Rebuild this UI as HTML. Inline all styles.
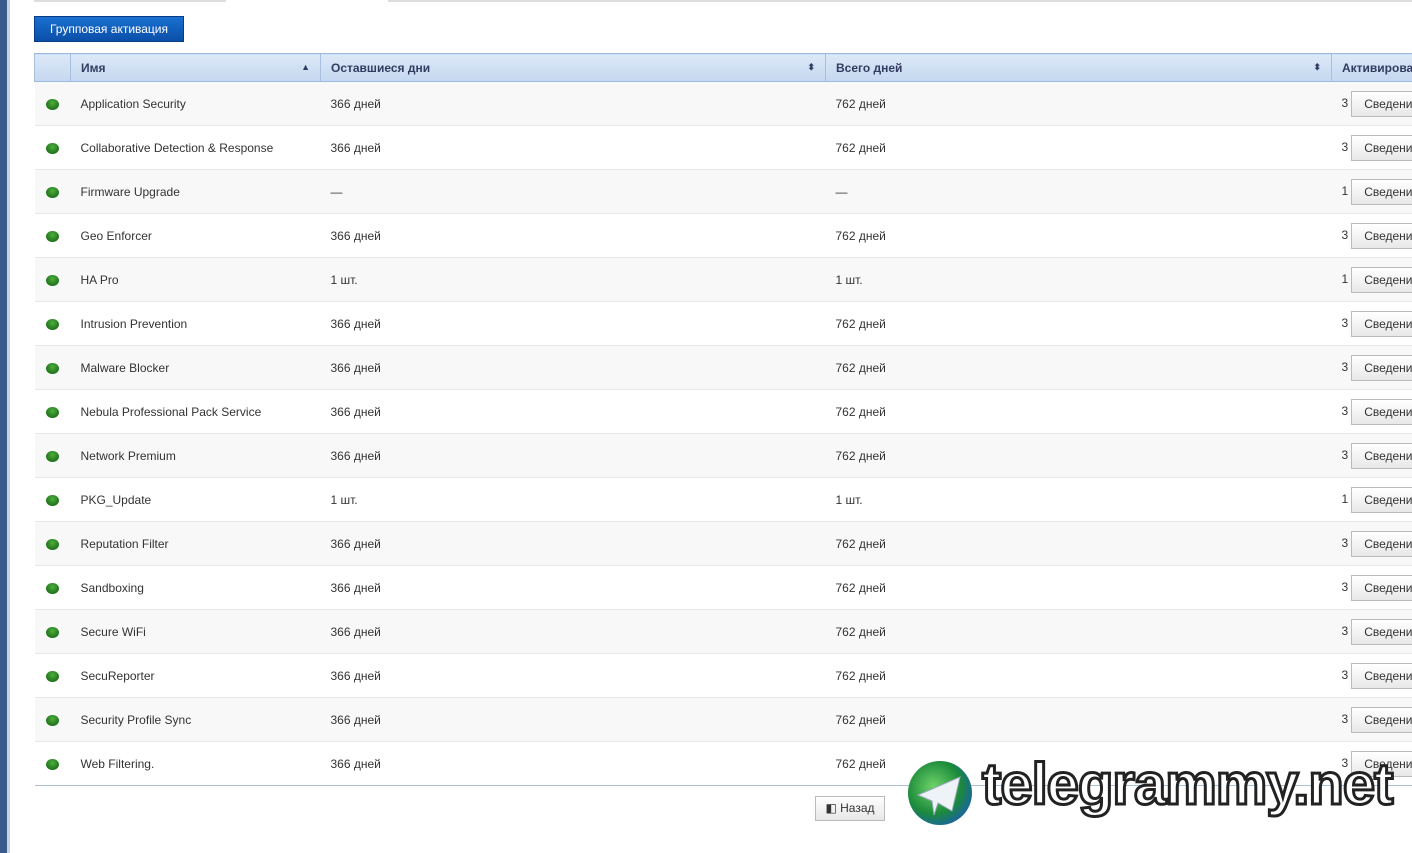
<!DOCTYPE html><html><head><meta charset="utf-8"><style>
body{margin:0;width:1412px;height:853px;overflow:hidden;background:#fff;font-family:"Liberation Sans",Arial,sans-serif;font-size:12px;color:#333;position:relative}
.side{position:absolute;left:0;top:0;width:7px;height:853px;background:#3a5a8c}
.side2{position:absolute;left:7px;top:0;width:3px;height:853px;background:#c8d4e4}
.tl{position:absolute;top:0;height:2px;background:#ddd}
.btn1{position:absolute;left:34px;top:16px;width:150px;height:26px;background:linear-gradient(#1a6fd0,#0a4fa8);color:#fff;font-size:12px;line-height:24px;text-align:center;border:1px solid #083d85;box-sizing:border-box}
table{position:absolute;left:34px;top:53px;border-collapse:collapse;width:1400px;table-layout:fixed}
th{height:27px;background:linear-gradient(#dce8f7,#c4d8f0);border-top:1px solid #9cb8dc;border-bottom:1px solid #9cb8dc;border-left:1px solid #a8c0e0;text-align:left;padding:0 10px;color:#333c60;font-weight:bold;font-size:12px;position:relative}
td{height:43px;border-bottom:1px solid #e6e6e6;padding:0 10px;white-space:nowrap;overflow:hidden;vertical-align:middle}
tr:nth-child(even) td{background:#f8f8f8}
tr:last-child td{border-bottom:1px solid #a9c0d6}
.dot{display:inline-block;width:13px;height:11px;border-radius:50%;background:radial-gradient(circle at 50% 35%,#4caf3a,#0d5a10);margin-left:1px;vertical-align:middle;margin-top:1px}
.sv{display:inline-block;border:1px solid #bbb;background:linear-gradient(#fff,#e8e8e8);height:24px;line-height:24px;padding:0 12px;vertical-align:middle;margin-left:3px}
.ar{position:absolute;right:10px;top:8px;font-size:9px}
.back{position:absolute;left:815px;top:796px;width:70px;height:25px;border:1px solid #bbb;background:linear-gradient(#fff,#e8e8e8);box-sizing:border-box;line-height:23px;text-align:center}
.logo{position:absolute;left:908px;top:761px;width:64px;height:64px;border-radius:50%;background:radial-gradient(circle at 40% 40%,#6fd36a,#1b8a3a 50%,#1a5fb0 80%)}
.wm{position:absolute;left:982px;top:751px;font-size:58px;font-weight:bold;color:#fff;-webkit-text-stroke:3px #222;letter-spacing:-1px}
</style></head><body>
<div class="side"></div><div class="side2"></div>
<div class="tl" style="left:34px;width:192px"></div><div class="tl" style="left:388px;width:1024px"></div>
<div class="btn1">Групповая активация</div>
<table>
<colgroup><col style="width:36px"><col style="width:250px"><col style="width:505px"><col style="width:506px"><col style="width:103px"></colgroup>
<tr><th></th><th>Имя<span class="ar">▲</span></th><th>Оставшиеся дни<span class="ar">⬍</span></th><th>Всего дней<span class="ar">⬍</span></th><th style="padding-left:10px">Активирова</th></tr>
<tr><td><span class="dot"></span></td><td>Application Security</td><td>366 дней</td><td>762 дней</td><td style="padding:0 0 0 10px">3<span class="sv">Сведения</span></td></tr>
<tr><td><span class="dot"></span></td><td>Collaborative Detection &amp; Response</td><td>366 дней</td><td>762 дней</td><td style="padding:0 0 0 10px">3<span class="sv">Сведения</span></td></tr>
<tr><td><span class="dot"></span></td><td>Firmware Upgrade</td><td>—</td><td>—</td><td style="padding:0 0 0 10px">1<span class="sv">Сведения</span></td></tr>
<tr><td><span class="dot"></span></td><td>Geo Enforcer</td><td>366 дней</td><td>762 дней</td><td style="padding:0 0 0 10px">3<span class="sv">Сведения</span></td></tr>
<tr><td><span class="dot"></span></td><td>HA Pro</td><td>1 шт.</td><td>1 шт.</td><td style="padding:0 0 0 10px">1<span class="sv">Сведения</span></td></tr>
<tr><td><span class="dot"></span></td><td>Intrusion Prevention</td><td>366 дней</td><td>762 дней</td><td style="padding:0 0 0 10px">3<span class="sv">Сведения</span></td></tr>
<tr><td><span class="dot"></span></td><td>Malware Blocker</td><td>366 дней</td><td>762 дней</td><td style="padding:0 0 0 10px">3<span class="sv">Сведения</span></td></tr>
<tr><td><span class="dot"></span></td><td>Nebula Professional Pack Service</td><td>366 дней</td><td>762 дней</td><td style="padding:0 0 0 10px">3<span class="sv">Сведения</span></td></tr>
<tr><td><span class="dot"></span></td><td>Network Premium</td><td>366 дней</td><td>762 дней</td><td style="padding:0 0 0 10px">3<span class="sv">Сведения</span></td></tr>
<tr><td><span class="dot"></span></td><td>PKG_Update</td><td>1 шт.</td><td>1 шт.</td><td style="padding:0 0 0 10px">1<span class="sv">Сведения</span></td></tr>
<tr><td><span class="dot"></span></td><td>Reputation Filter</td><td>366 дней</td><td>762 дней</td><td style="padding:0 0 0 10px">3<span class="sv">Сведения</span></td></tr>
<tr><td><span class="dot"></span></td><td>Sandboxing</td><td>366 дней</td><td>762 дней</td><td style="padding:0 0 0 10px">3<span class="sv">Сведения</span></td></tr>
<tr><td><span class="dot"></span></td><td>Secure WiFi</td><td>366 дней</td><td>762 дней</td><td style="padding:0 0 0 10px">3<span class="sv">Сведения</span></td></tr>
<tr><td><span class="dot"></span></td><td>SecuReporter</td><td>366 дней</td><td>762 дней</td><td style="padding:0 0 0 10px">3<span class="sv">Сведения</span></td></tr>
<tr><td><span class="dot"></span></td><td>Security Profile Sync</td><td>366 дней</td><td>762 дней</td><td style="padding:0 0 0 10px">3<span class="sv">Сведения</span></td></tr>
<tr><td><span class="dot"></span></td><td>Web Filtering.</td><td>366 дней</td><td>762 дней</td><td style="padding:0 0 0 10px">3<span class="sv">Сведения</span></td></tr>
</table>
<div class="back">◧ Назад</div>
<div class="logo"><svg width="64" height="64" viewBox="0 0 64 64"><path d="M10 34 L52 16 L44 50 L30 42 L26 54 L24 40 Z" fill="#eef3f8" stroke="#9ab" stroke-width="1"/></svg></div>
<div class="wm">telegrammy.net</div>
</body></html>
